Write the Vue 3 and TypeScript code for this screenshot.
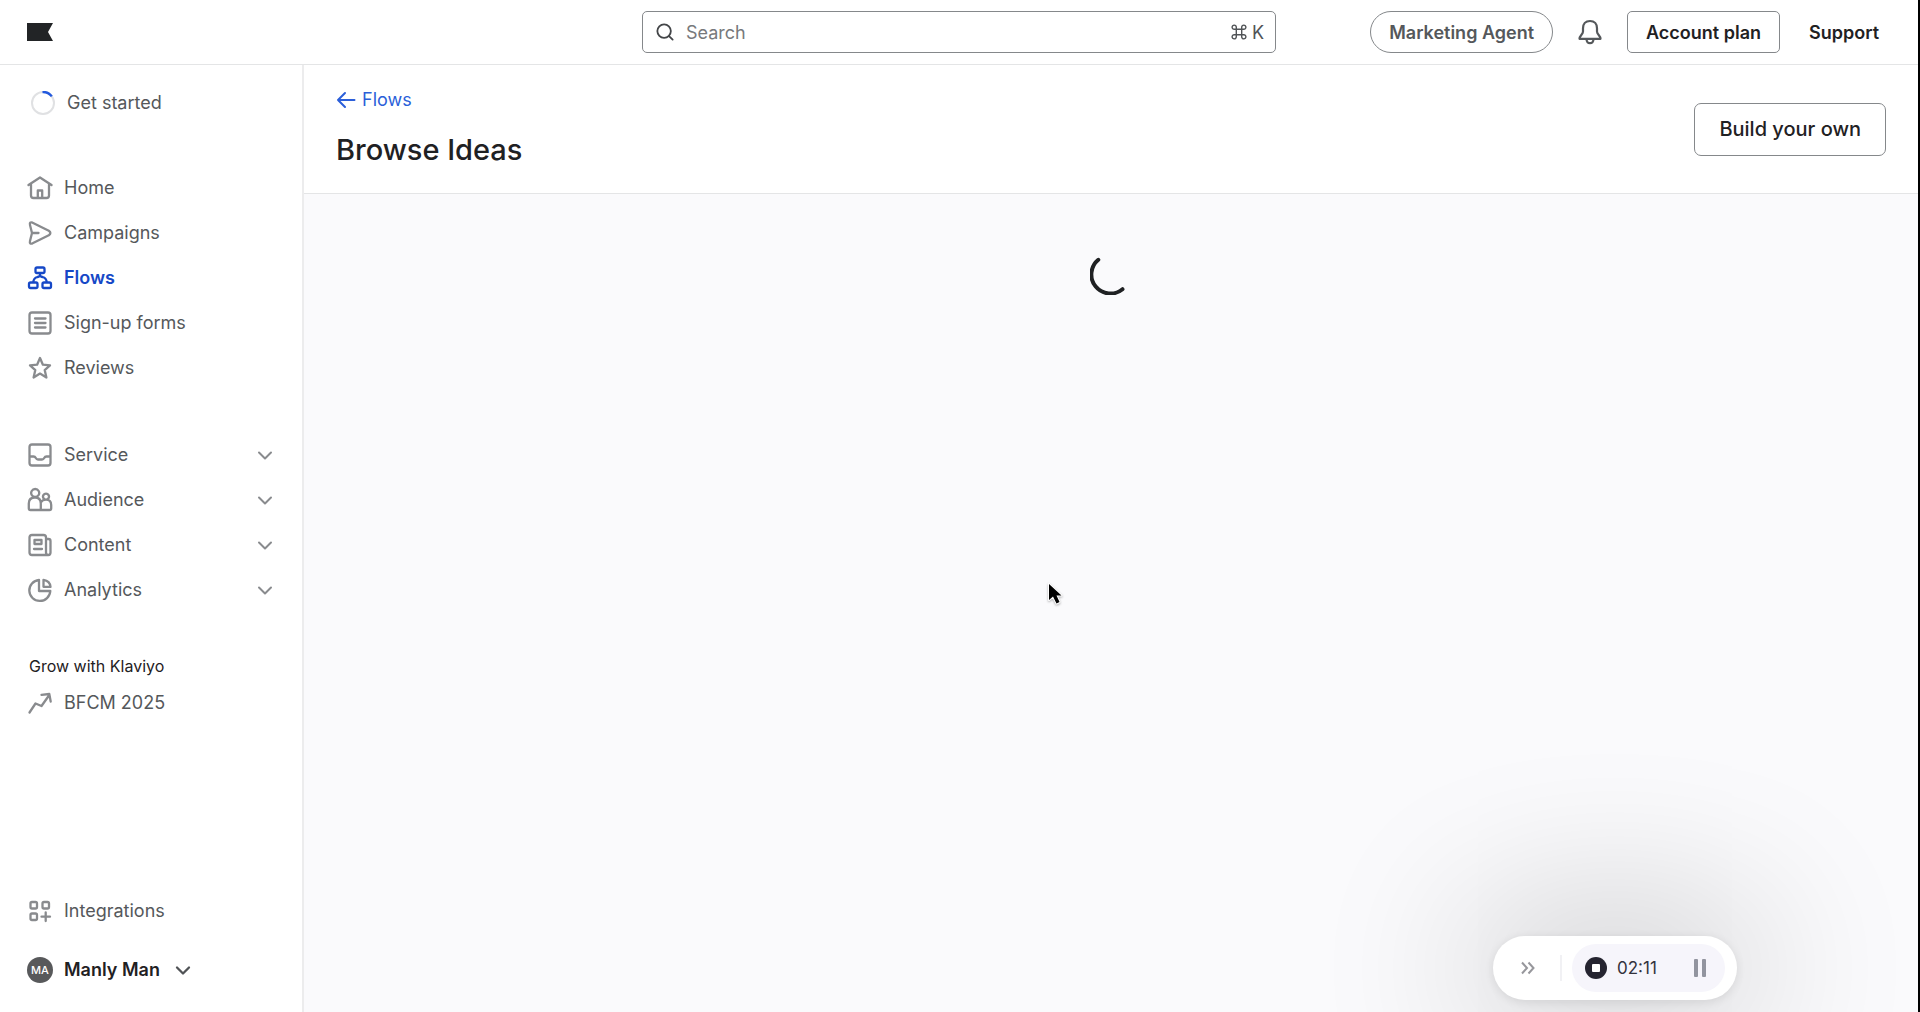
<script setup lang="ts">
interface NavItem {
  label: string
  icon: string
  active?: boolean
}

const mainItems: NavItem[] = [
  { label: 'Home', icon: 'home' },
  { label: 'Campaigns', icon: 'campaigns' },
  { label: 'Flows', icon: 'flows', active: true },
  { label: 'Sign-up forms', icon: 'forms' },
  { label: 'Reviews', icon: 'reviews' },
]

const groupItems: NavItem[] = [
  { label: 'Service', icon: 'service' },
  { label: 'Audience', icon: 'audience' },
  { label: 'Content', icon: 'content' },
  { label: 'Analytics', icon: 'analytics' },
]

const icons: Record<string, string> = {
  home: 'M1.5 10 L13 2.5 L24.5 10 M4 8.6 V20.5 Q4 23 6.500 23 H19.5 Q22 23 22 20.5 V8.6 M10.800 23 V15.5 H15.200 V23',
  campaigns:
    'M3 5 Q2.200 1.600 5.600 2.700 L21.800 10.700 Q25 13 21.800 15.300 L5.600 23.300 Q2.200 24.400 3 21 L5 13 Z M5 13 H11.500',
  flows:
    'M10 2.500 H16 Q17.500 2.500 17.500 4 V6.500 Q17.500 8 16 8 H10 Q8.500 8 8.500 6.500 V4 Q8.500 2.500 10 2.500 Z M3.500 17.500 H9 Q10.500 17.500 10.500 19 V21.500 Q10.500 23 9 23 H3.500 Q2 23 2 21.500 V19 Q2 17.500 3.500 17.500 Z M17 17.500 H22.500 Q24 17.500 24 19 V21.500 Q24 23 22.500 23 H17 Q15.500 23 15.500 21.500 V19 Q15.500 17.500 17 17.500 Z M13 8 V10 Q13 11.500 10.500 12 Q6.500 13 6.200 17.500 M13 10 Q13 11.500 15.500 12 Q19.500 13 19.800 17.500',
  forms:
    'M5 2.500 H21 Q23.500 2.500 23.500 5 V21 Q23.500 23.500 21 23.500 H5 Q2.500 23.500 2.500 21 V5 Q2.500 2.500 5 2.500 Z M8 8.500 H18.500 M8 13 H18.500 M8 17.500 H18.500',
  reviews:
    'M13 3 L15.900 9.700 L23 10.300 L17.700 15.100 L19.400 22.500 L13 18.600 L6.600 22.500 L8.300 15.100 L3 10.300 L10.100 9.700 Z',
  service:
    'M5 2.500 H21 Q23.500 2.500 23.500 5 V21 Q23.500 23.500 21 23.500 H5 Q2.500 23.500 2.500 21 V5 Q2.500 2.500 5 2.500 Z M2.500 14.500 H6.500 Q8 14.500 8.800 16 Q9.600 17.500 11 17.500 H15 Q16.400 17.500 17.200 16 Q18 14.500 19.500 14.500 H23.500',
  audience:
    'M8.200 2 A4 4 0 1 1 8.190 2 Z M19 6.600 A3 3 0 1 1 18.990 6.600 Z M3.500 23 Q1.800 23 1.800 21.300 V16.500 Q1.800 10.500 8 10.500 Q13.800 10.500 13.800 16.500 V23 Z M13.800 15.500 Q15.500 12.600 19 12.600 Q24.200 12.600 24.200 18 V21.300 Q24.200 23 22.500 23 H13.800',
  content:
    'M5 3 H16.500 Q19 3 19 5.500 V20.500 Q19 23 21.250 23 Q23.500 23 23.500 20.500 V9 Q23.500 7 21.500 7 H19 M21.250 23 H5 Q2.500 23 2.500 20.500 V5.500 Q2.500 3 5 3 M7.500 8 H14.500 V12 H7.500 Z M7 17 H15',
  analytics:
    'M12 3 A10.500 10.500 0 1 0 23.300 14 H12 Z M16.500 2.800 Q23 3.800 23.500 9.800 H16.500 Z',
  growth: 'M2.500 22.500 L8.500 13.500 L14.500 16 L22.300 5 M14.500 4.800 L22.300 4 L23.700 11.500',
  integrations:
    'M5 4 H8.500 Q10 4 10 5.500 V9 Q10 10.500 8.500 10.500 H5 Q3.500 10.500 3.500 9 V5.500 Q3.500 4 5 4 Z M17 4 H20.500 Q22 4 22 5.500 V9 Q22 10.500 20.500 10.500 H17 Q15.500 10.500 15.500 9 V5.500 Q15.500 4 17 4 Z M5 15.500 H8.500 Q10 15.500 10 17 V20.500 Q10 22 8.500 22 H5 Q3.500 22 3.500 20.500 V17 Q3.500 15.500 5 15.500 Z M18.700 14.500 V23 M14.500 18.700 H23',
}
</script>

<template>
  <div class="app">
    <header class="topbar">
      <a class="logo" href="#" aria-label="Klaviyo home">
        <svg width="26" height="18" viewBox="0 0 26 18"><path d="M0 0 H26 L21 9 L26 18 H0 Z" fill="#222426" /></svg>
      </a>
      <label class="search">
        <svg width="18" height="18" viewBox="0 0 20 20" fill="none" stroke="#434548" stroke-width="2" stroke-linecap="round">
          <circle cx="9" cy="9" r="7.500" /><path d="M14.500 14.500 L18.500 18.500" />
        </svg>
        <input type="text" placeholder="Search" aria-label="Search" />
        <span class="shortcut">
          <svg width="16" height="16" viewBox="0 0 16 16" fill="none" stroke="#505356" stroke-width="1.400">
            <path d="M5.300 5.300 H10.700 V10.700 H5.300 Z M5.300 5.300 H3.300 A2.100 2.100 0 1 1 5.300 3.300 Z M10.700 5.300 V3.300 A2.100 2.100 0 1 1 12.700 5.300 Z M10.700 10.700 H12.700 A2.100 2.100 0 1 1 10.700 12.700 Z M5.300 10.700 V12.700 A2.100 2.100 0 1 1 3.300 10.700 Z" />
          </svg>
          K
        </span>
      </label>
      <div class="actions">
        <button class="agent" type="button">Marketing Agent</button>
        <button class="bell" type="button" aria-label="Notifications">
          <svg width="26" height="26" viewBox="0 0 26 26" fill="none" stroke="#55585b" stroke-width="2.200" stroke-linejoin="round" stroke-linecap="round">
            <path d="M13 2 C8.500 2 6 5.200 6 9.300 V12.500 C6 15.500 2.500 16.500 2.500 19.800 H23.500 C23.500 16.500 20 15.500 20 12.500 V9.300 C20 5.200 17.500 2 13 2 Z M9.500 20.300 C9.800 25.500 16.200 25.500 16.500 20.300" />
          </svg>
        </button>
        <button class="plan" type="button">Account plan</button>
        <button class="support" type="button">Support</button>
      </div>
    </header>

    <div class="body">
      <aside class="sidebar">
        <a class="item started" href="#">
          <svg width="24" height="24" viewBox="0 0 24 24" fill="none" stroke-width="2">
            <circle cx="12" cy="12" r="11" stroke="#e0e1e3" />
            <path d="M11.500 1 A11 11 0 0 1 20.800 5.400" stroke="#2259de" stroke-width="2.400" />
          </svg>
          <span>Get started</span>
        </a>
        <nav class="group primary">
          <a v-for="item in mainItems" :key="item.label" class="item" :class="{ active: item.active }" href="#">
            <svg class="icon" width="26" height="26" viewBox="0 0 26 26"><path :d="icons[item.icon]" /></svg>
            <span>{{ item.label }}</span>
          </a>
        </nav>
        <nav class="group">
          <button v-for="item in groupItems" :key="item.label" class="item" type="button">
            <svg class="icon" width="26" height="26" viewBox="0 0 26 26"><path :d="icons[item.icon]" /></svg>
            <span>{{ item.label }}</span>
            <svg class="icon chevron" width="16" height="16" viewBox="0 0 16 16"><path d="M2 5.500 L8 11.500 L14 5.500" /></svg>
          </button>
        </nav>
        <section class="group">
          <h2>Grow with Klaviyo</h2>
          <a class="item" href="#">
            <svg class="icon" width="26" height="26" viewBox="0 0 26 26"><path :d="icons.growth" /></svg>
            <span>BFCM 2025</span>
          </a>
        </section>
        <div class="footer">
          <a class="item" href="#">
            <svg class="icon" width="26" height="26" viewBox="0 0 26 26"><path :d="icons.integrations" /></svg>
            <span>Integrations</span>
          </a>
          <button class="item user" type="button">
            <span class="avatar">MA</span>
            <span>Manly Man</span>
            <svg class="icon" width="16" height="16" viewBox="0 0 16 16"><path d="M2 5.500 L8 11.500 L14 5.500" /></svg>
          </button>
        </div>
      </aside>

      <main class="content">
        <div class="page-head">
          <div>
            <a class="back" href="#">
              <svg width="20" height="20" viewBox="0 0 20 20" fill="none" stroke="currentColor" stroke-width="2" stroke-linecap="round" stroke-linejoin="round">
                <path d="M9 3 L2 10 L9 17 M2 10 H18.500" />
              </svg>
              Flows
            </a>
            <h1>Browse Ideas</h1>
          </div>
          <button class="build" type="button">Build your own</button>
        </div>
        <div class="loading" role="status" aria-label="Loading">
          <svg width="42" height="42" viewBox="0 0 42 42" fill="none" stroke="#1f2123" stroke-width="4" stroke-linecap="round">
            <path d="M8.300 6.800 A19 19 0 0 0 32.500 36.200" />
          </svg>
        </div>
      </main>
    </div>

    <div class="recorder">
      <button class="collapse" type="button" aria-label="Collapse">
        <svg width="16" height="16" viewBox="0 0 16 16" fill="none" stroke="#97979c" stroke-width="2">
          <path d="M2 2.500 L7 8 L2 13.500 M8.500 2.500 L13.500 8 L8.500 13.500" />
        </svg>
      </button>
      <span class="divider"></span>
      <div class="timer">
        <button type="button" aria-label="Stop">
          <svg width="22" height="22" viewBox="0 0 22 22"><circle cx="11" cy="11" r="11" fill="#252430" /><rect x="7" y="7" width="8" height="8" rx="1" fill="#fff" /></svg>
        </button>
        <span class="time">02:11</span>
        <button type="button" aria-label="Pause">
          <svg width="12" height="18" viewBox="0 0 12 18" fill="#92949f"><rect width="4" height="18" rx="1" /><rect x="8" width="4" height="18" rx="1" /></svg>
        </button>
      </div>
    </div>

    <svg class="pointer" width="20" height="26" viewBox="0 0 20 26">
      <path d="M3 2 V18 L7 14.500 L10.500 21.500 L13.500 20 L10.500 13.500 H15.500 Z" fill="#000" stroke="#fff" stroke-width="2" stroke-linejoin="round" paint-order="stroke" />
    </svg>
  </div>
</template>

<style>
body {
  margin: 0;
  background: #fff;
}
</style>

<style scoped>
.app {
  box-sizing: border-box;
  display: flex;
  flex-direction: column;
  min-height: 100vh;
  border-right: 2px solid #000;
  background: #fff;
  color: #1f2123;
  font-family: Inter, "Liberation Sans", sans-serif;
  font-size: 18px;
}

svg {
  display: block;
  flex: none;
}

button {
  margin: 0;
  padding: 0;
  border: 0;
  background: none;
  color: inherit;
  font: inherit;
}

a {
  color: inherit;
  text-decoration: none;
}

.topbar {
  display: grid;
  grid-template-columns: 1fr minmax(0, 634px) 1fr;
  align-items: center;
  height: 64px;
  border-bottom: 1px solid #e4e5e6;
}

.logo {
  justify-self: start;
  margin-left: 27px;
}

.search {
  box-sizing: border-box;
  display: flex;
  align-items: center;
  gap: 12px;
  height: 42px;
  padding: 0 11px 0 13px;
  border: 1px solid #85888b;
  border-radius: 5px;
}

.search input {
  flex: 1;
  min-width: 0;
  padding: 0;
  border: 0;
  outline: 0;
  background: none;
  font: inherit;
}

.search input::placeholder {
  color: #77797c;
  opacity: 1;
}

.shortcut {
  display: flex;
  align-items: center;
  gap: 5px;
  color: #505356;
}

.actions {
  display: flex;
  align-items: center;
  justify-content: flex-end;
  padding-right: 39px;
  font-weight: 600;
  white-space: nowrap;
}

.agent,
.plan {
  height: 42px;
  padding: 0 18px;
  border: 1px solid #85888b;
}

.agent {
  border-radius: 21px;
  color: #55585b;
}

.bell {
  margin: 0 24px;
}

.plan {
  border-radius: 5px;
}

.support {
  margin-left: 29px;
}

.body {
  display: flex;
  flex: 1;
}

.sidebar {
  box-sizing: border-box;
  display: flex;
  flex: none;
  flex-direction: column;
  width: 304px;
  padding: 15px 0 20px;
  border-right: 2px solid #ececed;
}

.group {
  margin-top: 42px;
}

.primary {
  margin-top: 40px;
}

.item {
  box-sizing: border-box;
  display: flex;
  align-items: center;
  gap: 11px;
  width: 100%;
  height: 45px;
  padding: 0 29px 0 27px;
  color: #55585b;
  text-align: left;
}

.started {
  gap: 12px;
  padding-left: 31px;
}

.active {
  color: #1648c7;
  font-weight: 600;
}

.icon {
  fill: none;
  stroke: #898b8e;
  stroke-width: 2.3;
  stroke-linecap: round;
  stroke-linejoin: round;
}

.active .icon {
  stroke: #1648c7;
}

.chevron {
  margin-left: auto;
  stroke-width: 2;
}

h2 {
  margin: 0;
  padding-left: 29px;
  font-size: 16px;
  font-weight: 400;
  line-height: 24px;
}

h2 + .item {
  margin-top: 2px;
}

.footer {
  margin-top: auto;
}

.user {
  margin-top: 14px;
  color: #1f2123;
  font-weight: 600;
}

.user .icon {
  margin-left: 4px;
  stroke: #505356;
}

.avatar {
  flex: none;
  width: 26px;
  border-radius: 50%;
  background: #58595b;
  color: #fff;
  font-size: 11px;
  font-weight: 500;
  line-height: 26px;
  text-align: center;
}

.content {
  flex: 1;
  min-width: 0;
  background: #fafafc;
}

.page-head {
  display: flex;
  align-items: center;
  justify-content: space-between;
  height: 128px;
  padding: 0 32px;
  border-bottom: 1px solid #e4e5e6;
  background: #fff;
}

.back {
  display: flex;
  align-items: center;
  gap: 6px;
  color: #2b5fd9;
  line-height: 24px;
}

h1 {
  margin: 18px 0 0;
  font-size: 29px;
  font-weight: 500;
  line-height: 40px;
}

.build {
  height: 53px;
  padding: 0 24px;
  border: 1px solid #85888b;
  border-radius: 7px;
  font-size: 20px;
  font-weight: 500;
}

.loading {
  display: flex;
  justify-content: center;
  padding-top: 59px;
}

.recorder {
  position: fixed;
  right: 183px;
  bottom: 12px;
  box-sizing: border-box;
  display: flex;
  align-items: center;
  width: 244px;
  height: 64px;
  padding: 0 12px 0 27px;
  border-radius: 32px;
  background: #fff;
  box-shadow:
    0 2px 12px rgba(0, 0, 0, 0.1),
    0 0 160px 30px rgba(0, 0, 0, 0.18);
}

.divider {
  width: 2px;
  height: 26px;
  margin: 0 10px 0 24px;
  background: #f1f1f4;
}

.timer {
  box-sizing: border-box;
  display: flex;
  flex: 1;
  align-items: center;
  height: 48px;
  padding: 0 19px 0 13px;
  border-radius: 24px;
  background: #f6f5fb;
}

.time {
  flex: 1;
  padding-left: 10px;
  color: #33323d;
  font-size: 17px;
}

.pointer {
  position: fixed;
  top: 582px;
  left: 1046px;
  filter: drop-shadow(0 1px 1px rgba(0, 0, 0, 0.3));
}
</style>
